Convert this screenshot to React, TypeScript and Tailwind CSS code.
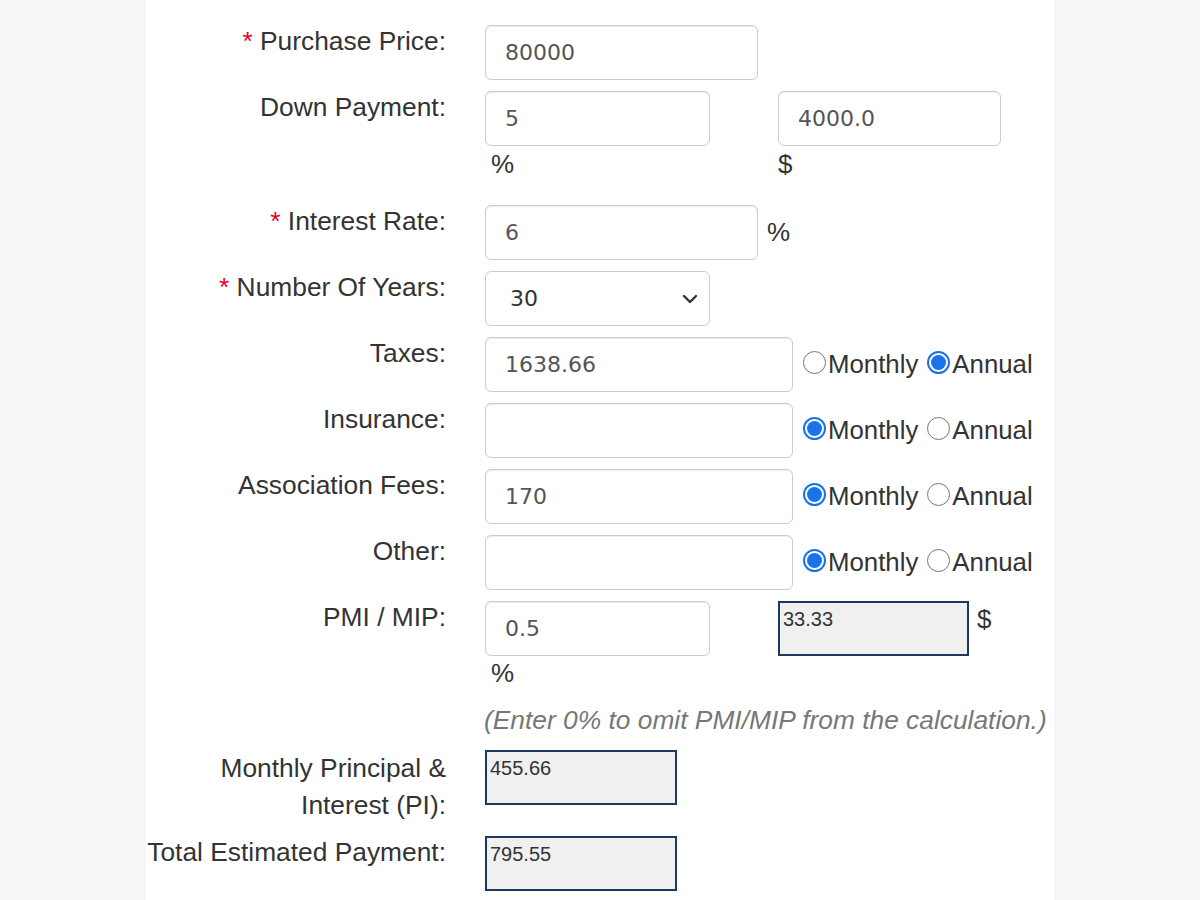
import React from "react";

type RadioProps = { checked?: boolean; label: string };

function Radio({ checked, label }: RadioProps) {
  return (
    <span className="flex items-center">
      {checked ? (
        <span className="w-[23px] h-[23px] mb-[5px] rounded-full border-2 border-[#1a73e8] bg-white flex items-center justify-center">
          <span className="w-[15px] h-[15px] rounded-full bg-[#1a73e8]" />
        </span>
      ) : (
        <span className="w-[23px] h-[23px] mb-[5px] rounded-full border-[1.5px] border-[#767676] bg-white" />
      )}
      <span className="ml-[2px]">{label}</span>
    </span>
  );
}

function Frequency({ annual }: { annual?: boolean }) {
  return (
    <div className="ml-[10px] h-[55px] flex items-center gap-[9px] text-[25.8px] leading-[37px] text-[#333]">
      <Radio checked={!annual} label="Monthly" />
      <Radio checked={annual} label="Annual" />
    </div>
  );
}

function TextInput({ value, width }: { value?: string; width: string }) {
  return (
    <input
      defaultValue={value}
      className={`${width} h-[55px] rounded-[6px] border border-[#cccccc] bg-white pl-[19px] text-[22px] text-[#555] shadow-[inset_0_1px_1px_rgba(0,0,0,0.075)] outline-none font-['DejaVu_Sans',sans-serif]`}
    />
  );
}

function Output({ value, width }: { value: string; width: string }) {
  return (
    <div
      className={`${width} h-[55px] border-2 border-[#1c3a5e] bg-[#f0f0f0] px-[3px] pt-[4px] text-[20px] leading-[24px] text-[#333]`}
    >
      {value}
    </div>
  );
}

function Row({
  label,
  required,
  flush,
  children,
}: {
  label: React.ReactNode;
  required?: boolean;
  flush?: boolean;
  children: React.ReactNode;
}) {
  return (
    <div className="flex items-start">
      <div
        className={`w-[300px] shrink-0 text-right text-[26.35px] leading-[37px] text-[#333] ${
          flush ? "mb-[1px]" : "-mt-[2px]"
        }`}
      >
        {required && <span className="text-[#e4002b]">* </span>}
        {label}
      </div>
      <div className="ml-[39px] flex-1">{children}</div>
    </div>
  );
}

export default function App() {
  return (
    <div className="min-h-screen bg-[#f6f5f7] font-['Liberation_Sans',Arial,sans-serif]">
      <div className="mx-auto w-[908px] min-h-screen bg-white pt-[25px] pb-[20px] flex flex-col gap-[11px]">
        <Row label="Purchase Price:" required>
          <TextInput value="80000" width="w-[273px]" />
        </Row>

        <Row label="Down Payment:">
          <div className="flex">
            <div className="w-[293px]">
              <TextInput value="5" width="w-[225px]" />
              <div className="h-[48px] pl-[6px] text-[26px] leading-[37px] text-[#333]">%</div>
            </div>
            <div>
              <TextInput value="4000.0" width="w-[223px]" />
              <div className="h-[48px] text-[26px] leading-[37px] text-[#333]">$</div>
            </div>
          </div>
        </Row>

        <Row label="Interest Rate:" required>
          <div className="flex items-center">
            <TextInput value="6" width="w-[273px]" />
            <span className="ml-[9px] text-[26px] leading-[37px] text-[#333]">%</span>
          </div>
        </Row>

        <Row label="Number Of Years:" required>
          <div className="w-[225px] h-[55px] rounded-[6px] border border-[#cccccc] bg-white pl-[24px] pr-[11px] flex items-center justify-between text-[22px] text-[#333] font-['DejaVu_Sans',sans-serif]">
            <span>30</span>
            <svg width="16" height="10" viewBox="0 0 16 10" fill="none">
              <path d="M2 2l6 6 6-6" stroke="#333" strokeWidth="2.4" strokeLinecap="round" strokeLinejoin="round" />
            </svg>
          </div>
        </Row>

        <Row label="Taxes:">
          <div className="flex">
            <TextInput value="1638.66" width="w-[308px]" />
            <Frequency annual />
          </div>
        </Row>

        <Row label="Insurance:">
          <div className="flex">
            <TextInput width="w-[308px]" />
            <Frequency />
          </div>
        </Row>

        <Row label="Association Fees:">
          <div className="flex">
            <TextInput value="170" width="w-[308px]" />
            <Frequency />
          </div>
        </Row>

        <Row label="Other:">
          <div className="flex">
            <TextInput width="w-[308px]" />
            <Frequency />
          </div>
        </Row>

        <Row label="PMI / MIP:">
          <div className="flex">
            <div className="w-[293px]">
              <TextInput value="0.5" width="w-[225px]" />
              <div className="h-[35px] pl-[6px] text-[26px] leading-[35px] text-[#333]">%</div>
            </div>
            <div className="flex items-start">
              <Output value="33.33" width="w-[191px]" />
              <span className="ml-[8px] text-[26px] leading-[37px] text-[#333]">$</span>
            </div>
          </div>
        </Row>

        <Row label="">
          <div className="whitespace-nowrap italic text-[26.35px] leading-[37px] text-[#777] -ml-[1px]">
            (Enter 0% to omit PMI/MIP from the calculation.)
          </div>
        </Row>

        <Row
          flush
          label={
            <>
              Monthly Principal &amp;
              <br />
              Interest (PI):
            </>
          }
        >
          <Output value="455.66" width="w-[192px]" />
        </Row>

        <Row label={<span className="whitespace-nowrap">Total Estimated Payment:</span>}>
          <Output value="795.55" width="w-[192px]" />
        </Row>
      </div>
    </div>
  );
}
